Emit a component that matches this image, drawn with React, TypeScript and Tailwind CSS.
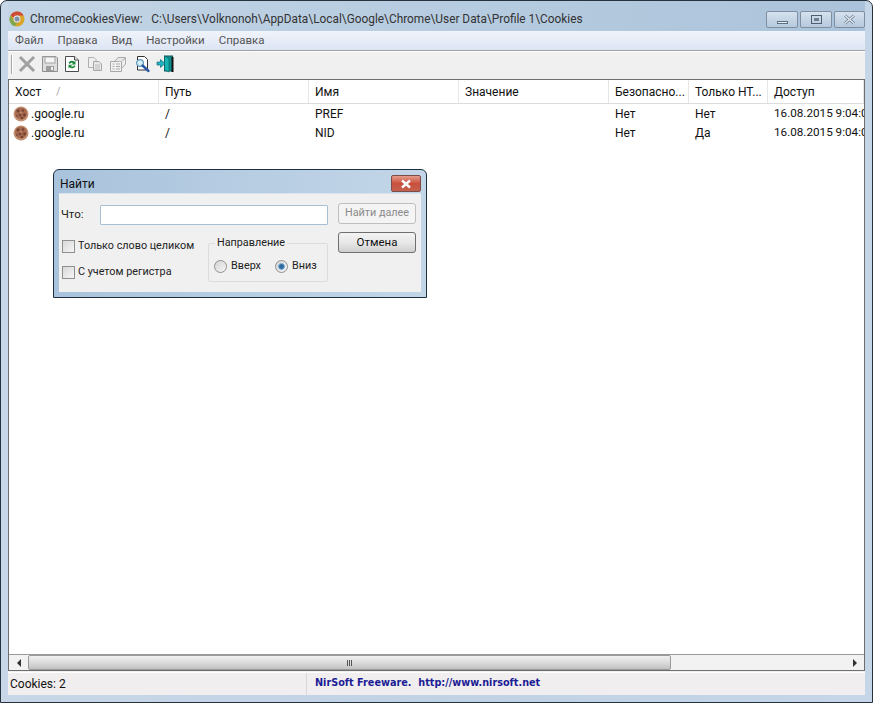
import React from 'react';

const columns = [
  { label: 'Хост', width: 'w-[150px]' },
  { label: 'Путь', width: 'w-[150px]' },
  { label: 'Имя', width: 'w-[150px]' },
  { label: 'Значение', width: 'w-[150px]' },
  { label: 'Безопасно...', width: 'w-[80px]' },
  { label: 'Только НТ...', width: 'w-[79px]' },
  { label: 'Доступ', width: 'flex-1' },
];

const rows = [
  { host: '.google.ru', path: '/', name: 'PREF', value: '', secure: 'Нет', http: 'Нет', access: '16.08.2015 9:04:01' },
  { host: '.google.ru', path: '/', name: 'NID', value: '', secure: 'Нет', http: 'Да', access: '16.08.2015 9:04:01' },
];

const ChromeLogo = () => (
  <svg width="16" height="16" viewBox="0 0 16 16" className="shrink-0">
    <circle cx="8" cy="8" r="7.5" fill="#d9a62a" />
    <path d="M1.6 4.2A7.5 7.5 0 0 1 14.6 4.4L8 4.6C6 4.6 5 5.6 4.6 6.8Z" fill="#cf4a3a" />
    <path d="M1.6 4.2L5 10.6C6 12 7 12 8.4 12.2L5.6 15.2A7.5 7.5 0 0 1 1.6 4.2Z" fill="#7fa84e" />
    <circle cx="8" cy="8" r="3.4" fill="#e8eef5" />
    <circle cx="8" cy="8" r="2.5" fill="#7f8fa8" />
  </svg>
);

const Cookie = () => (
  <svg width="16" height="16" viewBox="0 0 16 16" className="shrink-0">
    <circle cx="8" cy="8" r="7.5" fill="#c49478" />
    <circle cx="8" cy="7.5" r="6" fill="#a8684b" />
    <circle cx="5" cy="5" r="1.4" fill="#6c4032" />
    <circle cx="10" cy="4.5" r="1.2" fill="#73453a" />
    <circle cx="11.5" cy="9" r="1.4" fill="#6c4032" />
    <circle cx="7" cy="9" r="1.3" fill="#73453a" />
    <circle cx="4" cy="10" r="1" fill="#7d5042" />
    <circle cx="9" cy="12" r="1.2" fill="#6c4032" />
    <circle cx="8" cy="6.5" r="0.7" fill="#d4a88c" />
  </svg>
);

const ToolbarIcons = () => (
  <div className="flex items-center h-[27px] pl-[3px] pb-[3px] shrink-0">
    <div className="w-[2px] h-[19px] bg-[#a8a8a8] border-r border-white" />
    {/* delete */}
    <svg width="18" height="18" viewBox="0 0 18 18" className="ml-[5px]">
      <path d="M3 3L15 15M15 3L3 15" stroke="#a0a0a0" strokeWidth="3" strokeLinecap="square" />
    </svg>
    {/* save */}
    <svg width="18" height="18" viewBox="0 0 18 18" className="ml-[5px]">
      <path d="M1.5 1.5H15L16.5 3V16.5H1.5Z" fill="#dedede" stroke="#8f8f8f" />
      <rect x="4" y="2" width="10" height="6" fill="#f6f6f6" stroke="#a3a3a3" />
      <rect x="5" y="11" width="8" height="5" fill="#9d9d9d" />
      <rect x="10" y="12" width="2" height="3" fill="#eee" />
    </svg>
    {/* refresh */}
    <svg width="16" height="18" viewBox="0 0 16 18" className="ml-[5px]">
      <path d="M1.5 1.5H10.5L14.5 5V16.5H1.5Z" fill="#fff" stroke="#4a4a4a" />
      <path d="M10.5 1.5V5H14.5" fill="#e3e3e3" stroke="#4a4a4a" />
      <path d="M4.5 8A3.6 3.6 0 0 1 10.5 6.8L11.5 5.5V9.5H7.5L9 8.2A2 2 0 0 0 6 9Z" fill="#1f8a3c" />
      <path d="M11.5 11A3.6 3.6 0 0 1 5.5 12.2L4.5 13.5V9.8H8.3L7 11A2 2 0 0 0 10 10.2Z" fill="#1f8a3c" />
    </svg>
    {/* copy */}
    <svg width="16" height="16" viewBox="0 0 16 16" className="ml-[7px]">
      <path d="M1.5 1.5H7L9 3.5V11.5H1.5Z" fill="#efefef" stroke="#b0b0b0" />
      <path d="M6.5 5.5H12L14.5 8V14.5H6.5Z" fill="#e8e8e8" stroke="#a6a6a6" />
      <path d="M8 9H13M8 11H13M8 13H13" stroke="#bcbcbc" />
    </svg>
    {/* properties */}
    <svg width="18" height="18" viewBox="0 0 18 18" className="ml-[6px]">
      <path d="M1.5 6.5H12.5V16.5H1.5Z" fill="#f1f1f1" stroke="#a6a6a6" />
      <path d="M3.5 9H5.5M3.5 11.5H5.5M3.5 14H5.5M7 9H11M7 11.5H11M7 14H11" stroke="#a9a9a9" />
      <path d="M6 6L9 2.5H16.5L13 6.5" fill="#e6e6e6" stroke="#ababab" />
      <path d="M16.5 3V9L13 13" fill="none" stroke="#ababab" />
    </svg>
    {/* find */}
    <svg width="17" height="18" viewBox="0 0 17 18" className="ml-[7px]">
      <path d="M3.5 1.5H10.5L13.5 4.5V15H3.5Z" fill="#fff" stroke="#333" />
      <circle cx="6" cy="8" r="3.4" fill="#d5eef8" stroke="#5f97b8" strokeWidth="1.2" />
      <path d="M8.5 10.5L14.5 16" stroke="#2a5aa6" strokeWidth="2.4" strokeLinecap="round" />
    </svg>
    {/* exit */}
    <svg width="18" height="18" viewBox="0 0 18 18" className="ml-[5px]">
      <rect x="8.5" y="1" width="8" height="15" fill="#0e8f8f" stroke="#0a5a5a" />
      <path d="M8.5 1L13 3.5V17L8.5 15Z" fill="#19b3b3" stroke="#0a5a5a" strokeWidth="0.6" />
      <rect x="15.5" y="2" width="2" height="15" fill="#111" />
      <path d="M1 7H4.5V4.5L9 8.5L4.5 12.5V10H1Z" fill="#23b5c4" stroke="#0d6d78" strokeWidth="0.7" />
    </svg>
  </div>
);

const Checkbox = ({ label }: { label: string }) => (
  <div className="flex items-center gap-[3px] h-[14px] whitespace-nowrap">
    <div className="w-[13px] h-[13px] border border-[#8e8f8f] bg-gradient-to-br from-[#d8d8d8] to-[#f6f6f6] shrink-0" />
    <span className="text-[10.8px] leading-none text-[#222]">{label}</span>
  </div>
);

const Radio = ({ label, checked }: { label: string; checked?: boolean }) => (
  <div className="flex items-center gap-[4px] whitespace-nowrap">
    <div className="w-[13px] h-[13px] rounded-full border border-[#8e8f8f] bg-gradient-to-br from-[#d4d4d4] to-[#f7f7f7] flex items-center justify-center shrink-0">
      {checked && <div className="w-[7px] h-[7px] rounded-full bg-[#2f6a9e] border border-[#7fb4dc]" />}
    </div>
    <span className="text-[10.8px] leading-none text-[#222]">{label}</span>
  </div>
);

const FindDialog = () => (
  <div className="absolute left-[53px] top-[169px] w-[374px] h-[129px] rounded-t-[6px] border border-[#1d2f3f] bg-gradient-to-r from-[#a9c3dc] to-[#c3d6e8] flex flex-col px-[5px] pb-[5px]">
    <div className="h-[23px] flex items-start justify-between shrink-0">
      <span className="text-[12px] leading-none mt-[8px] ml-[1px] text-[#111]">Найти</span>
      <div className="w-[30px] h-[17px] mt-[5px] rounded-[2px] border border-[#7a4d48] bg-gradient-to-b from-[#e59a8c] via-[#c8503c] to-[#c4604f] flex items-center justify-center">
        <svg width="12" height="10" viewBox="0 0 12 10">
          <path d="M2 1.5L10 8.5M10 1.5L2 8.5" stroke="#fff" strokeWidth="2.4" />
        </svg>
      </div>
    </div>
    <div className="flex-1 bg-[#f0f0f0] border-t border-[#d7e3ee] flex pl-[1px] pr-[5px]">
      <div className="w-[278px] flex flex-col">
        <div className="flex items-center h-[20px] mt-[11px]">
          <span className="w-[40px] pl-[1px] text-[11.5px] leading-none text-[#222]">Что:</span>
          <div className="w-[228px] h-[20px] bg-white border border-[#a9bfd3] rounded-[1px]" />
        </div>
        <div className="flex mt-[14px]">
          <div className="w-[148px] flex flex-col gap-[12px] pl-[2px]">
            <Checkbox label="Только слово целиком" />
            <Checkbox label="С учетом регистра" />
          </div>
          <fieldset className="w-[120px] h-[46px] border border-[#dcdcdc] rounded-[2px] px-[5px] -mt-[3px]">
            <legend className="ml-[1px] px-[2px] text-[10.8px] leading-[14px] text-[#222]">Направление</legend>
            <div className="flex gap-[14px] mt-[10px]">
              <Radio label="Вверх" />
              <Radio label="Вниз" checked />
            </div>
          </fieldset>
        </div>
      </div>
      <div className="w-[78px] flex flex-col gap-[8px] pt-[9px]">
        <div className="h-[21px] rounded-[3px] border border-[#bfbfbf] bg-[#f4f4f4] flex items-center justify-center text-[10.8px] leading-none text-[#8a8a8a] whitespace-nowrap">
          Найти далее
        </div>
        <div className="h-[21px] rounded-[3px] border border-[#6f6f6f] bg-gradient-to-b from-[#f3f3f3] via-[#e8e8e8] to-[#cfcfcf] flex items-center justify-center text-[11.5px] leading-none text-[#111]">
          Отмена
        </div>
      </div>
    </div>
  </div>
);

export default function App() {
  return (
    <div className="relative w-[873px] h-[703px] overflow-hidden bg-white font-['Roboto','Noto_Sans',sans-serif]">
      <div className="w-full h-full rounded-t-[7px] border border-[#26323c] bg-gradient-to-r from-[#c7d7e8] via-[#c0d3e5] to-[#c4d6e7] flex flex-col px-[7px] pb-[7px]">
        {/* title bar */}
        <div className="h-[30px] shrink-0 flex items-start justify-between bg-gradient-to-r from-[#c3d5e6] to-[#abc3da]">
          <div className="flex items-center h-[18px] mt-[9px] gap-[5px] ml-[1px]">
            <ChromeLogo />
            <span className="pt-[1px] text-[11.85px] leading-none text-[#333] whitespace-pre">
              ChromeCookiesView:{'   '}C:\Users\Volknonoh\AppData\Local\Google\Chrome\User Data\Profile 1\Cookies
            </span>
          </div>
          <div className="flex gap-[2px] mt-[10px] text-[#555]">
            <div className="w-[32px] h-[17px] rounded-[2px] border border-[#7d8fa1] bg-gradient-to-b from-[#d6e2ee] to-[#b6c9dc] flex items-end justify-center pb-[3px]">
              <div className="w-[11px] h-[3px] bg-[#e8eef4] border border-[#5e6f80]" />
            </div>
            <div className="w-[32px] h-[17px] rounded-[2px] border border-[#7d8fa1] bg-gradient-to-b from-[#d6e2ee] to-[#b6c9dc] flex items-center justify-center">
              <div className="w-[11px] h-[9px] border border-[#4f5f6f] flex items-center justify-center">
                <div className="w-[5px] h-[3px] bg-[#6f7f8f]" />
              </div>
            </div>
            <div className="w-[31px] h-[17px] rounded-[2px] border border-[#7d8fa1] bg-gradient-to-b from-[#d6e2ee] to-[#b6c9dc] flex items-center justify-center">
              <svg width="13" height="11" viewBox="0 0 13 11">
                <path d="M2 1.5L11 9.5M11 1.5L2 9.5" stroke="#6b7c90" strokeWidth="2.8" />
                <path d="M2 1.5L11 9.5M11 1.5L2 9.5" stroke="#e6edf4" strokeWidth="1.2" />
              </svg>
            </div>
          </div>
        </div>

        <div className="flex-1 min-h-0 flex flex-col bg-[#f0f0f0]">
          {/* menu */}
          <div className="h-[19px] shrink-0 bg-gradient-to-b from-[#f0f4fb] to-[#dde4f3] flex items-center pl-[7px] gap-[14px] text-[11.5px] leading-none text-[#555]">
            <span>Файл</span>
            <span>Правка</span>
            <span>Вид</span>
            <span>Настройки</span>
            <span>Справка</span>
          </div>
          <div className="h-[2px] shrink-0 bg-[#a0a0a0] border-b border-white" />
          <ToolbarIcons />

          {/* list with its scrollbar */}
          <div className="flex-1 min-h-0 flex flex-col border border-[#6e6e6e]">
            <div className="flex-1 min-h-0 flex flex-col bg-white overflow-hidden">
              <div className="h-[24px] shrink-0 flex border-b border-[#dcdcdc] text-[12px] leading-none text-[#111]">
                {columns.map((col, i) => (
                  <div key={col.label} className={`${col.width} flex items-center pl-[6px] border-r border-[#e6e6e6]`}>
                    {col.label}
                    {i === 0 && <span className="ml-[15px] text-[10px] text-[#9a9a9a]">/</span>}
                  </div>
                ))}
              </div>
              <div className="flex flex-col text-[12px] leading-none text-[#111] whitespace-nowrap">
                {rows.map((row) => (
                  <div key={row.name} className="h-[19px] flex items-center">
                    <div className="w-[150px] pl-[4px] flex items-center gap-[2px]">
                      <Cookie />
                      {row.host}
                    </div>
                    <div className="w-[150px] pl-[6px]">{row.path}</div>
                    <div className="w-[150px] pl-[6px]">{row.name}</div>
                    <div className="w-[150px] pl-[6px]">{row.value}</div>
                    <div className="w-[80px] pl-[6px]">{row.secure}</div>
                    <div className="w-[79px] pl-[6px]">{row.http}</div>
                    <div className="flex-1 pl-[6px] pt-[1px] overflow-hidden text-[11.7px]">{row.access}</div>
                  </div>
                ))}
              </div>
            </div>

            {/* horizontal scrollbar */}
            <div className="h-[16px] shrink-0 flex items-center bg-[#f2f2f2] border-t border-[#9a9a9a]">
              <div className="w-[19px] flex justify-center">
                <div className="w-0 h-0 border-y-[4px] border-y-transparent border-r-[4px] border-r-[#333]" />
              </div>
              <div className="w-[643px] h-[15px] rounded-[2px] border border-[#9a9a9a] bg-gradient-to-b from-[#f0f0f0] via-[#dcdcdc] to-[#c2c2c2] flex items-center justify-center gap-[1px]">
                <div className="w-[1px] h-[6px] bg-[#555]" />
                <div className="w-[1px] h-[6px] bg-[#555]" />
                <div className="w-[1px] h-[6px] bg-[#555]" />
              </div>
              <div className="flex-1 flex justify-end pr-[7px]">
                <div className="w-0 h-0 border-y-[4px] border-y-transparent border-l-[4px] border-l-[#333]" />
              </div>
            </div>
          </div>

          {/* status bar */}
          <div className="h-[23px] mt-[1px] shrink-0 flex bg-[#f0eeee] border-t border-white">
            <div className="w-[299px] flex items-center pl-[2px] text-[12px] leading-none text-[#111] border-r border-[#d8d8d8]">
              Cookies: 2
            </div>
            <div className="flex-1 pl-[8px] pt-[3px] font-['DejaVu_Sans',sans-serif] font-bold text-[9.7px] leading-[14px] text-[#1c1c96] whitespace-pre">
              NirSoft Freeware.{'  '}http://www.nirsoft.net
            </div>
          </div>
        </div>
      </div>
      <FindDialog />
    </div>
  );
}
